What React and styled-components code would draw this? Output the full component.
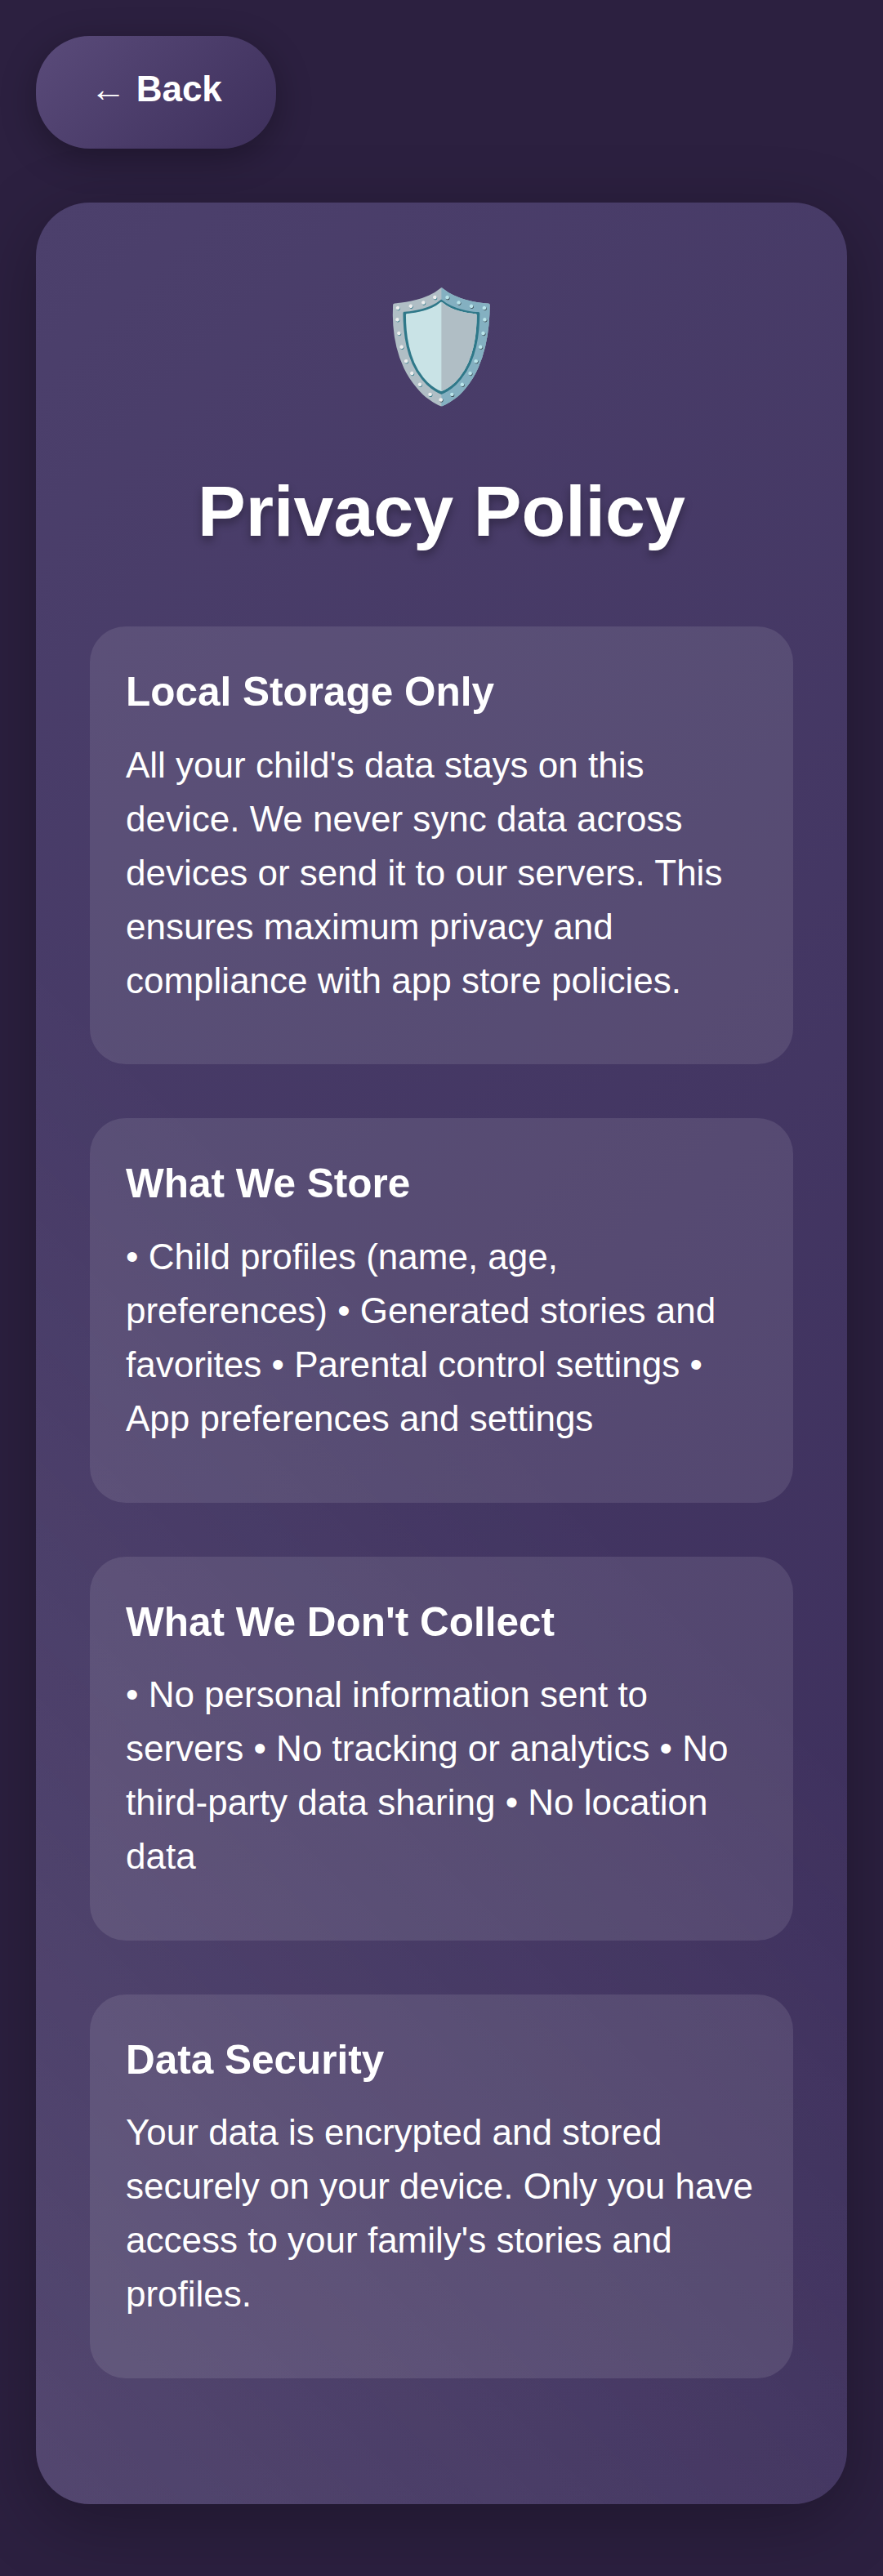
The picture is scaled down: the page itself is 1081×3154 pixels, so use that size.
import React from "react";
import styled, { createGlobalStyle } from "styled-components";

const GlobalStyle = createGlobalStyle`
  * { box-sizing: border-box; }
  body {
    margin: 0;
    background: #2c2040;
    font-family: "Liberation Sans", Arial, sans-serif;
    color: #fff;
  }
`;

const Page = styled.div`
  min-height: 3154px;
  padding: 44px 44px 88px;
  display: flex;
  flex-direction: column;
  align-items: flex-start;
  gap: 66px;
`;

const BackButton = styled.button`
  width: 294.25px;
  height: 137.5px;
  padding: 0 0 7px;
  border: 0;
  border-radius: 66px;
  background: linear-gradient(135deg, #5a4b7a 0%, #3d2f5b 100%);
  box-shadow: 0 11px 44px rgba(0, 0, 0, 0.3);
  color: #fff;
  font: 700 44px/50px "Liberation Sans", Arial, sans-serif;
  white-space: nowrap;
`;

const Card = styled.main`
  width: 100%;
  height: 2818.5px;
  padding: 66px;
  border-radius: 66px;
  background:
    linear-gradient(45deg, rgba(255, 255, 255, 0.1) 0%, rgba(255, 255, 255, 0) 50%),
    linear-gradient(135deg, #4c406c 0%, #3b2d5a 100%);
  box-shadow: 0 22px 88px rgba(0, 0, 0, 0.3);
`;

const Emblem = styled.div`
  height: 220px;
  padding: 1px 2px 0 0;
  font-size: 132px;
  line-height: 220px;
  text-align: center;
`;

const Title = styled.h1`
  margin: 26px 0 75.5px;
  font-size: 88px;
  line-height: 132px;
  font-weight: 700;
  text-align: center;
  text-shadow: 0 5.5px 11px rgba(0, 0, 0, 0.3);
`;

const Sections = styled.div`
  display: flex;
  flex-direction: column;
  gap: 66px;
`;

const Section = styled.section`
  padding: 44px 44px 69.75px;
  border-radius: 44px;
  background: rgba(255, 255, 255, 0.1);
`;

const SectionTitle = styled.h2`
  margin: 0 0 21px;
  font-size: 49.5px;
  line-height: 71.5px;
  font-weight: 700;
`;

const SectionText = styled.p`
  margin: 0;
  font-size: 44px;
  line-height: 66px;
`;

const sections = [
  {
    title: "Local Storage Only",
    text: "All your child's data stays on this device. We never sync data across devices or send it to our servers. This ensures maximum privacy and compliance with app store policies.",
  },
  {
    title: "What We Store",
    text: "• Child profiles (name, age, preferences) • Generated stories and favorites • Parental control settings • App preferences and settings",
  },
  {
    title: "What We Don't Collect",
    text: "• No personal information sent to servers • No tracking or analytics • No third-party data sharing • No location data",
  },
  {
    title: "Data Security",
    text: "Your data is encrypted and stored securely on your device. Only you have access to your family's stories and profiles.",
  },
];

export default function App() {
  return (
    <>
      <GlobalStyle />
      <Page>
        <BackButton>← Back</BackButton>
        <Card>
          <Emblem>🛡️</Emblem>
          <Title>Privacy Policy</Title>
          <Sections>
            {sections.map((s) => (
              <Section key={s.title}>
                <SectionTitle>{s.title}</SectionTitle>
                <SectionText>{s.text}</SectionText>
              </Section>
            ))}
          </Sections>
        </Card>
      </Page>
    </>
  );
}
